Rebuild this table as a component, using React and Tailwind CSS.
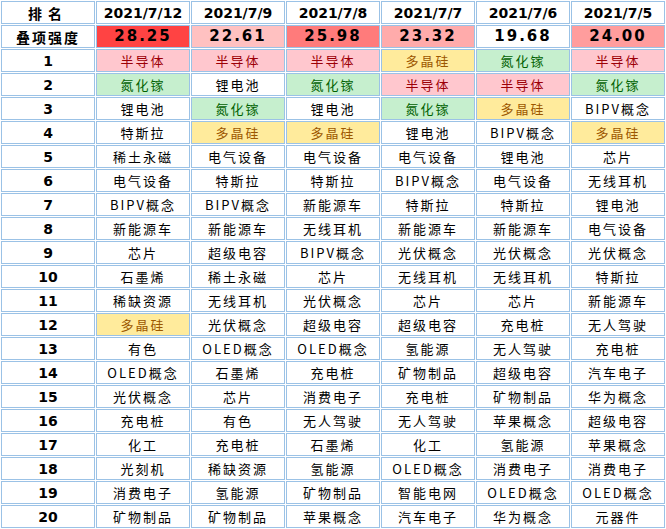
import React from 'react';

const dates = ['2021/7/12', '2021/7/9', '2021/7/8', '2021/7/7', '2021/7/6', '2021/7/5'];

const strength = [
  { v: '28.25', bg: 'bg-[#ff4343]' },
  { v: '22.61', bg: 'bg-[#ffc1c1]' },
  { v: '25.98', bg: 'bg-[#ff7b7b]' },
  { v: '23.32', bg: 'bg-[#ffabab]' },
  { v: '19.68', bg: 'bg-white' },
  { v: '24.00', bg: 'bg-[#ff9d9d]' },
];

const rows = [
  ['半导体', '半导体', '半导体', '多晶硅', '氮化镓', '半导体'],
  ['氮化镓', '锂电池', '氮化镓', '半导体', '半导体', '氮化镓'],
  ['锂电池', '氮化镓', '锂电池', '氮化镓', '多晶硅', 'BIPV概念'],
  ['特斯拉', '多晶硅', '多晶硅', '锂电池', 'BIPV概念', '多晶硅'],
  ['稀土永磁', '电气设备', '电气设备', '电气设备', '锂电池', '芯片'],
  ['电气设备', '特斯拉', '特斯拉', 'BIPV概念', '电气设备', '无线耳机'],
  ['BIPV概念', 'BIPV概念', '新能源车', '特斯拉', '特斯拉', '锂电池'],
  ['新能源车', '新能源车', '无线耳机', '新能源车', '新能源车', '电气设备'],
  ['芯片', '超级电容', 'BIPV概念', '光伏概念', '光伏概念', '光伏概念'],
  ['石墨烯', '稀土永磁', '芯片', '无线耳机', '无线耳机', '特斯拉'],
  ['稀缺资源', '无线耳机', '光伏概念', '芯片', '芯片', '新能源车'],
  ['多晶硅', '光伏概念', '超级电容', '超级电容', '充电桩', '无人驾驶'],
  ['有色', 'OLED概念', 'OLED概念', '氢能源', '无人驾驶', '充电桩'],
  ['OLED概念', '石墨烯', '充电桩', '矿物制品', '超级电容', '汽车电子'],
  ['光伏概念', '芯片', '消费电子', '充电桩', '矿物制品', '华为概念'],
  ['充电桩', '有色', '无人驾驶', '无人驾驶', '苹果概念', '超级电容'],
  ['化工', '充电桩', '石墨烯', '化工', '氢能源', '苹果概念'],
  ['光刻机', '稀缺资源', '氢能源', 'OLED概念', '消费电子', '消费电子'],
  ['消费电子', '氢能源', '矿物制品', '智能电网', 'OLED概念', 'OLED概念'],
  ['矿物制品', '矿物制品', '苹果概念', '汽车电子', '华为概念', '元器件'],
];

const cellStyle = (name) => {
  if (name === '半导体') return 'bg-[#ffc7ce] text-[#9c0006]';
  if (name === '氮化镓') return 'bg-[#c6efce] text-[#006100]';
  if (name === '多晶硅') return 'bg-[#ffeb9c] text-[#9c5700]';
  return 'bg-white text-black';
};

const td = 'h-[23px] p-0 border border-[#9bc2e6] text-center align-middle leading-none whitespace-nowrap overflow-hidden';
const cjk = "font-['Noto_Sans_CJK_SC',sans-serif]";
const latin = "font-['DejaVu_Sans','Noto_Sans_CJK_SC',sans-serif]";

export default function App() {
  return (
    <div className="w-[666px] h-[529px] bg-white overflow-hidden">
      <table className="w-[666px] table-fixed border-separate border-spacing-px">
        <tbody>
          <tr>
            <td className={`${td} ${cjk} text-[14px] font-bold tracking-[6px] text-black`}>排名</td>
            {dates.map((d) => (
              <td key={d} className={`${td} ${latin} text-[14px] font-bold text-black`}>
                {d}
              </td>
            ))}
          </tr>
          <tr>
            <td className={`${td} ${cjk} text-[14px] font-bold tracking-[2px] text-black`}>叠项强度</td>
            {strength.map((s, i) => (
              <td key={i} className={`${td} ${s.bg} ${latin} text-[15px] font-bold tracking-[2px] text-black`}>
                {s.v}
              </td>
            ))}
          </tr>
          {rows.map((r, i) => (
            <tr key={i}>
              <td className={`${td} ${latin} text-[14px] font-bold text-black`}>{i + 1}</td>
              {r.map((name, j) => (
                <td key={j} className={`${td} ${cellStyle(name)} ${cjk} text-[13px] tracking-[2px]`}>
                  {name}
                </td>
              ))}
            </tr>
          ))}
        </tbody>
      </table>
    </div>
  );
}
